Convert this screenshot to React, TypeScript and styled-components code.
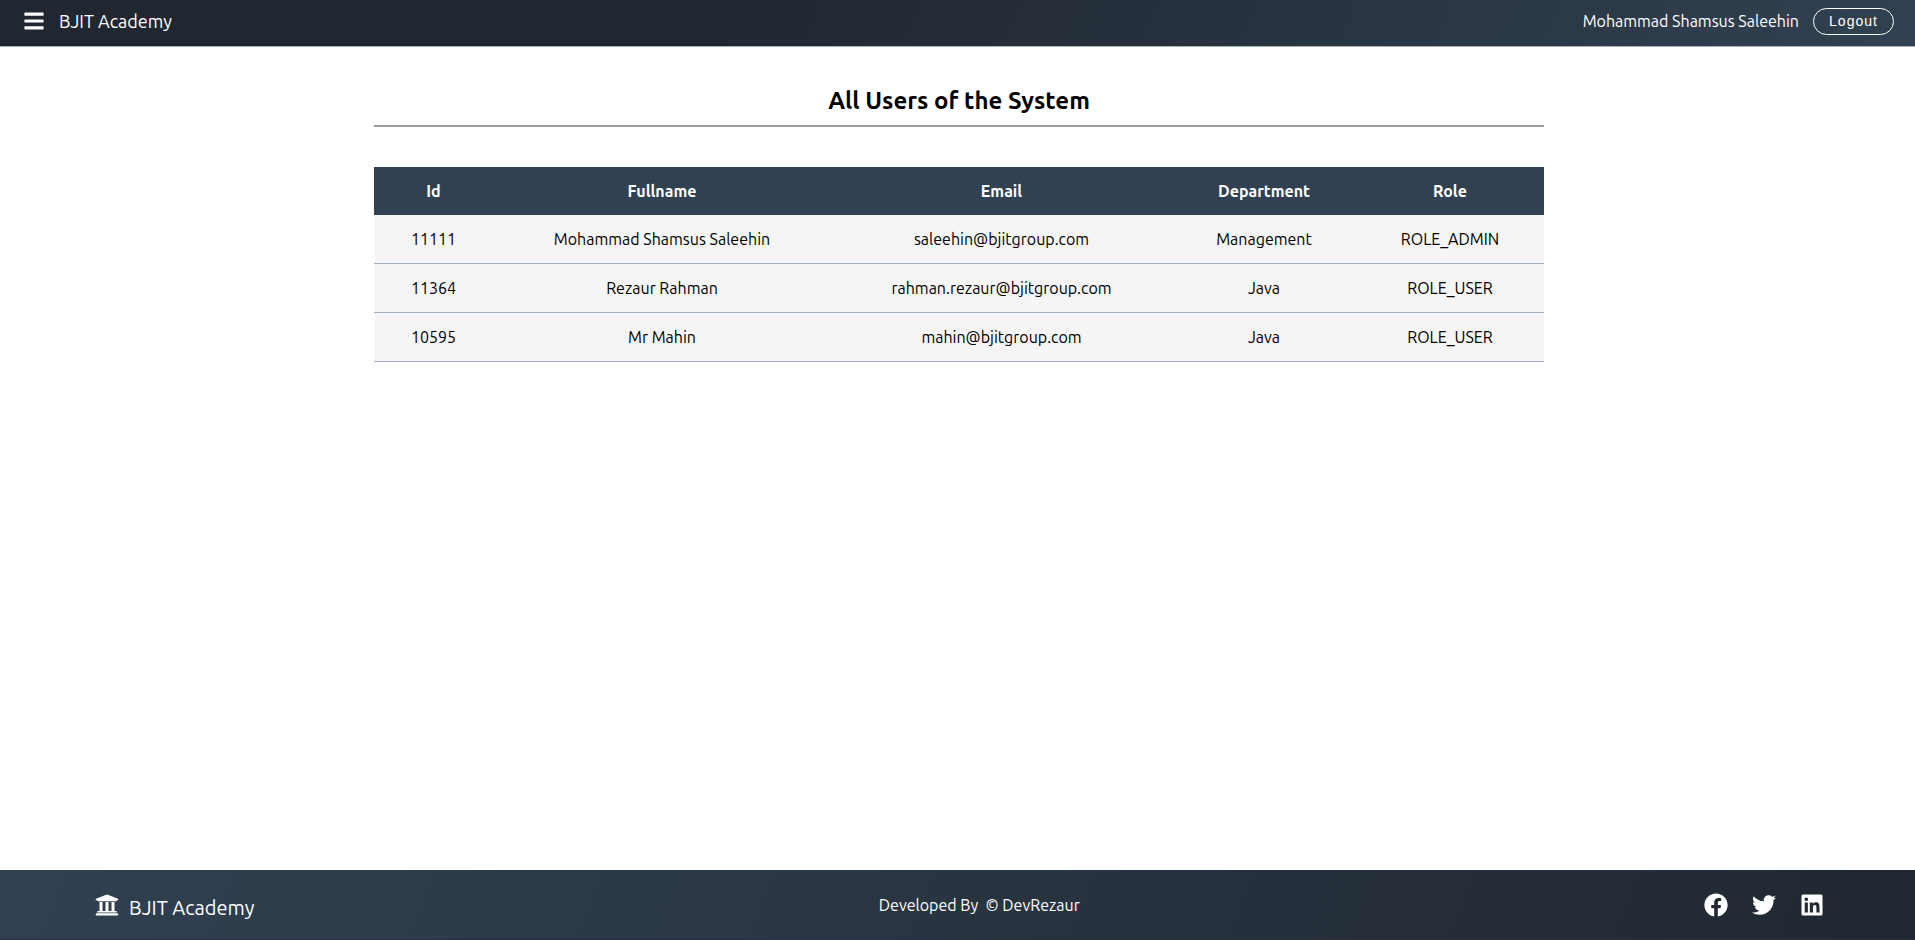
import React from "react";
import styled, { createGlobalStyle } from "styled-components";
import { FaBars, FaFacebook, FaTwitter, FaLinkedin, FaUniversity } from "react-icons/fa";

const GlobalStyle = createGlobalStyle`
  * { box-sizing: border-box; }
  body {
    margin: 0;
    background: #fff;
    color: #000;
    font-family: Ubuntu, "Noto Sans", sans-serif;
    font-size: 16px;
    line-height: 24px;
  }
`;

const Page = styled.div`
  display: flex;
  flex-direction: column;
  min-height: 100vh;
`;

const Header = styled.header`
  display: flex;
  align-items: center;
  justify-content: space-between;
  height: 47px;
  padding: 0 21px 4px 23px;
  color: #fff;
  background: linear-gradient(112deg, #202731 0%, #202731 38%, #314151 100%);
  border-bottom: 1px solid #a4b0be;
`;

const HeaderGroup = styled.div`
  display: flex;
  align-items: center;
  gap: 14px;
`;

const MenuButton = styled.button`
  display: flex;
  padding: 0;
  border: 0;
  background: none;
  color: inherit;
  font-size: 22px;
  cursor: pointer;
`;

const Brand = styled.a<{ $size: number }>`
  display: flex;
  align-items: flex-end;
  gap: 10px;
  color: inherit;
  font-size: ${(p) => p.$size}px;
  line-height: 18px;
  text-decoration: none;
`;

const LogoutButton = styled.button`
  width: 81px;
  height: 27px;
  padding: 0;
  border: 1px solid #fff;
  border-radius: 14px;
  background: none;
  color: #fff;
  font: 14px "Liberation Sans", Arial, sans-serif;
  letter-spacing: 1px;
  cursor: pointer;
`;

const Main = styled.main`
  flex: 1;
  width: 100%;
  max-width: 1173px;
  margin: 0 auto;
  padding: 36px 0 0 3px;
`;

const Title = styled.h1`
  margin: 0 0 40px;
  padding-bottom: 6px;
  border-bottom: 2px solid #9c9c9c;
  font-size: 24px;
  line-height: 36px;
  text-align: center;
`;

const Table = styled.table`
  width: 100%;
  border-spacing: 0;
  table-layout: fixed;
  text-align: center;
`;

const HeadCell = styled.th`
  height: 48px;
  padding: 0;
  background: #314151;
  color: #fff;
`;

const Column = styled.col<{ $share: number }>`
  width: calc(100% * ${(p) => p.$share / 1170});
`;

const Cell = styled.td`
  height: 49px;
  padding: 0;
  background: #f5f5f5;
  border-bottom: 1px solid #a4b0be;
`;

const Footer = styled.footer`
  display: flex;
  align-items: center;
  justify-content: space-between;
  height: 70px;
  padding: 0 91px 0 95px;
  color: #fff;
  background: linear-gradient(112deg, #314151 0%, #202731 100%);
  border-bottom: 1px solid #2b2d42;
`;

const Credit = styled.p`
  margin: 0;
  white-space: pre;
`;

const Socials = styled.nav`
  display: flex;
  align-items: center;
  gap: 24px;
  font-size: 24px;
`;

const SocialLink = styled.a`
  display: flex;
  color: inherit;
`;

// Shares are relative widths that add up to 1170.
const columns = [
  { label: "Id", share: 119 },
  { label: "Fullname", share: 338 },
  { label: "Email", share: 341 },
  { label: "Department", share: 184 },
  { label: "Role", share: 188 },
];

const users = [
  ["11111", "Mohammad Shamsus Saleehin", "saleehin@bjitgroup.com", "Management", "ROLE_ADMIN"],
  ["11364", "Rezaur Rahman", "rahman.rezaur@bjitgroup.com", "Java", "ROLE_USER"],
  ["10595", "Mr Mahin", "mahin@bjitgroup.com", "Java", "ROLE_USER"],
];

export default function App() {
  return (
    <Page>
      <GlobalStyle />
      <Header>
        <HeaderGroup>
          <MenuButton aria-label="Menu"><FaBars /></MenuButton>
          <Brand href="#" $size={18}>BJIT Academy</Brand>
        </HeaderGroup>
        <HeaderGroup>
          <span>Mohammad Shamsus Saleehin</span>
          <LogoutButton>Logout</LogoutButton>
        </HeaderGroup>
      </Header>
      <Main>
        <Title>All Users of the System</Title>
        <Table>
          <colgroup>
            {columns.map((c) => <Column key={c.label} $share={c.share} />)}
          </colgroup>
          <thead>
            <tr>{columns.map((c) => <HeadCell key={c.label} scope="col">{c.label}</HeadCell>)}</tr>
          </thead>
          <tbody>
            {users.map((user) => (
              <tr key={user[0]}>{user.map((value, i) => <Cell key={i}>{value}</Cell>)}</tr>
            ))}
          </tbody>
        </Table>
      </Main>
      <Footer>
        <Brand href="#" $size={20}><FaUniversity size={24} />BJIT Academy</Brand>
        <Credit>{"Developed By  © DevRezaur"}</Credit>
        <Socials aria-label="Social links">
          <SocialLink href="#" aria-label="Facebook"><FaFacebook /></SocialLink>
          <SocialLink href="#" aria-label="Twitter"><FaTwitter /></SocialLink>
          <SocialLink href="#" aria-label="LinkedIn"><FaLinkedin /></SocialLink>
        </Socials>
      </Footer>
    </Page>
  );
}
